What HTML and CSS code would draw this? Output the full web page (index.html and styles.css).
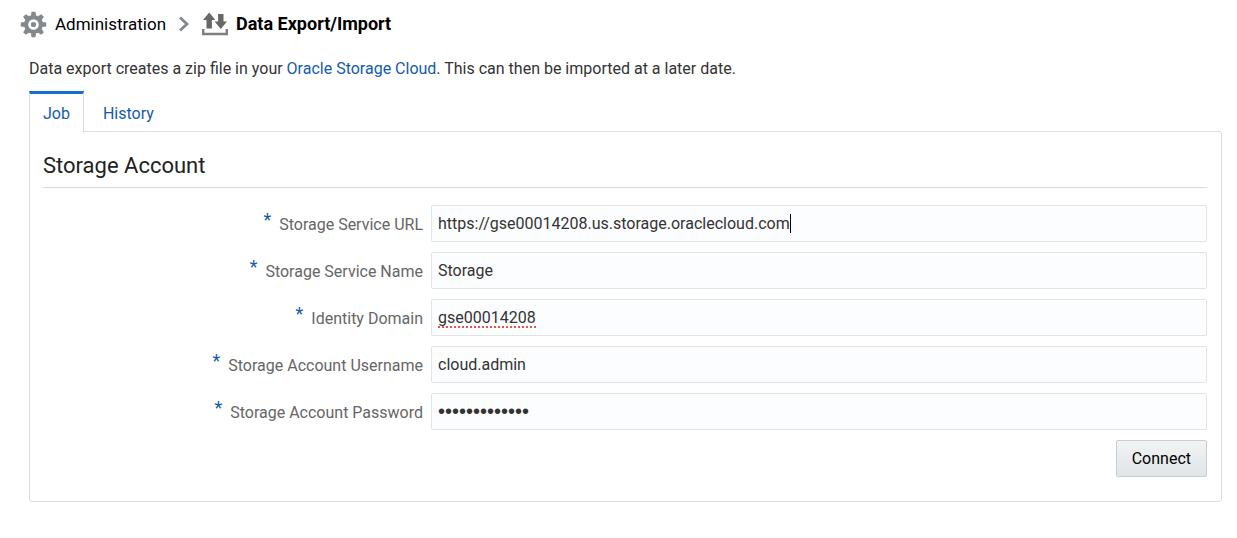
FILE: index.html
```html
<!DOCTYPE html>
<html lang="en">
<head>
<meta charset="utf-8">
<meta name="viewport" content="width=device-width, initial-scale=1">
<title>Data Export/Import</title>
<link rel="stylesheet" href="styles.css">
</head>
<body>
<nav class="breadcrumb" aria-label="Breadcrumb">
  <a class="crumb" href="#admin">
    <svg class="gear" viewBox="0 0 28 28" aria-hidden="true">
      <g fill="#82888c">
        <g id="teeth"><path d="M11.3 5 12 .8h4l.7 4.2zM11.3 23l.7 4.2h4l.7-4.2zM5 11.3.8 12v4l4.2.7zM23 11.3l4.2.7v4l-4.2.7z"/></g>
        <use href="#teeth" transform="rotate(45 14 14)"/>
        <path fill-rule="evenodd" d="M14 4.2a9.8 9.8 0 1 0 0 19.6 9.8 9.8 0 0 0 0-19.6zm0 4.3a5.5 5.5 0 1 1 0 11 5.5 5.5 0 0 1 0-11z"/>
        <circle cx="14" cy="14" r="2.7"/>
      </g>
    </svg>
    <span>Administration</span>
  </a>
  <svg class="chevron" viewBox="0 0 12 16" aria-hidden="true"><path d="M2 1.5 9 8l-7 6.500" fill="none" stroke="#82888c" stroke-width="2.800"/></svg>
  <span class="crumb current" aria-current="page">
    <svg class="transfer" viewBox="0 0 26 24" aria-hidden="true">
      <path fill="#666769" d="M7.200 .5 13.400 8h-3.500v8.500H4.500V8H1zM16.100 2h5.400v7.500H25L18.800 17l-6.200-7.500h3.500z"/>
      <path fill="none" stroke="#7c7e80" stroke-width="2.400" d="M1.200 17v5h23.600v-5"/>
    </svg>
    <span>Data Export/Import</span>
  </span>
</nav>
<main class="content">
  <p class="intro">Data export creates a zip file in your <a href="#cloud">Oracle Storage Cloud</a>. This can then be imported at a later date.</p>
  <div class="tabs" role="tablist">
    <button class="tab selected" type="button" role="tab" aria-selected="true">Job</button>
    <button class="tab" type="button" role="tab" aria-selected="false">History</button>
  </div>
  <section class="panel" role="tabpanel">
    <h1 class="heading">Storage Account</h1>
    <form class="form">
      <div class="row">
        <label for="url"><span class="required">*</span>Storage Service URL</label>
        <div class="field"><input class="fit" id="url" type="text" value="https://gse00014208.us.storage.oraclecloud.com" required><span class="caret"></span></div>
      </div>
      <div class="row">
        <label for="name"><span class="required">*</span>Storage Service Name</label>
        <div class="field"><input id="name" type="text" value="Storage" required></div>
      </div>
      <div class="row">
        <label for="domain"><span class="required">*</span>Identity Domain</label>
        <div class="field"><span class="misspelled"><input class="fit" id="domain" type="text" value="gse00014208" spellcheck="false" required></span></div>
      </div>
      <div class="row">
        <label for="user"><span class="required">*</span>Storage Account Username</label>
        <div class="field"><input id="user" type="text" value="cloud.admin" required></div>
      </div>
      <div class="row">
        <label for="password"><span class="required">*</span>Storage Account Password</label>
        <div class="field"><input class="password" id="password" type="password" value="abcdefghijklm" required></div>
      </div>
      <button class="connect" type="button">Connect</button>
    </form>
  </section>
</main>
</body>
</html>
```
FILE: styles.css
```css
* { box-sizing: border-box; }

body {
  margin: 0;
  background: #fff;
  color: #333;
  font: 16px/20px Roboto, "Liberation Sans", sans-serif;
}

a { color: #145ba8; text-decoration: none; }
button, input { font: inherit; }

.breadcrumb {
  display: flex;
  align-items: center;
  height: 48px;
  padding-left: 20px;
  color: #000;
}
.crumb { display: flex; align-items: center; gap: 8px; color: #000; font-size: 17px; }
.current { font-size: 18px; font-weight: 700; }
.gear { width: 27px; height: 27px; }
.chevron { width: 12px; height: 16px; margin: 0 12px; }
.transfer { width: 26px; height: 24px; }

.content { padding: 11px 15px 36px 29px; }
.intro { margin: 0 0 12px; }

.tabs { display: flex; }
.tab {
  height: 40px;
  padding: 5px 19px 0;
  border: 0;
  background: none;
  color: #145ba8;
}
.selected {
  position: relative;
  height: 42px;
  margin-bottom: -2px;
  padding: 0 13px;
  border: 1px solid #d6dfe6;
  border-top: 3px solid #1370cb;
  border-bottom: 0;
  background: #fff;
}

.panel {
  padding: 20px 14px 24px 13px;
  border: 1px solid #d6dfe6;
  border-radius: 0 3px 3px 3px;
}
.heading {
  margin: 0 0 17px;
  padding-bottom: 7px;
  border-bottom: 1px solid #d6dbdf;
  color: #222;
  font-size: 22px;
  font-weight: 400;
  line-height: 28px;
}

.form { display: flex; flex-direction: column; gap: 10px; }
.row { display: grid; grid-template-columns: 1fr 2fr; }
.row label {
  display: flex;
  justify-content: flex-end;
  gap: 8px;
  padding: 10px 8px 0 0;
  color: #666;
}
.required { margin-top: -5px; color: #145ba8; font-size: 18px; }
.field {
  display: flex;
  align-items: center;
  height: 37px;
  padding: 0 6px;
  border: 1px solid #dfe4e7;
  border-radius: 2px;
  background: #fcfdfe;
}
.field input {
  width: 100%;
  padding: 0;
  border: 0;
  outline: 0;
  background: none;
  color: #333;
}
.field .fit { width: auto; field-sizing: content; }
.field .password { font-family: "Liberation Sans", sans-serif; font-size: 20px; }
.caret { width: 1px; height: 19px; background: #000; }
.misspelled { display: flex; position: relative; }
.misspelled::after {
  content: "";
  position: absolute;
  right: 0;
  bottom: 0;
  left: 0;
  border-bottom: 2px dotted #f0504a;
}

.connect {
  align-self: flex-end;
  height: 37px;
  padding: 0 15px;
  border: 1px solid #c4ced7;
  border-radius: 2px;
  background: linear-gradient(#f1f3f4, #e1e5e8);
  color: #000;
}
```
